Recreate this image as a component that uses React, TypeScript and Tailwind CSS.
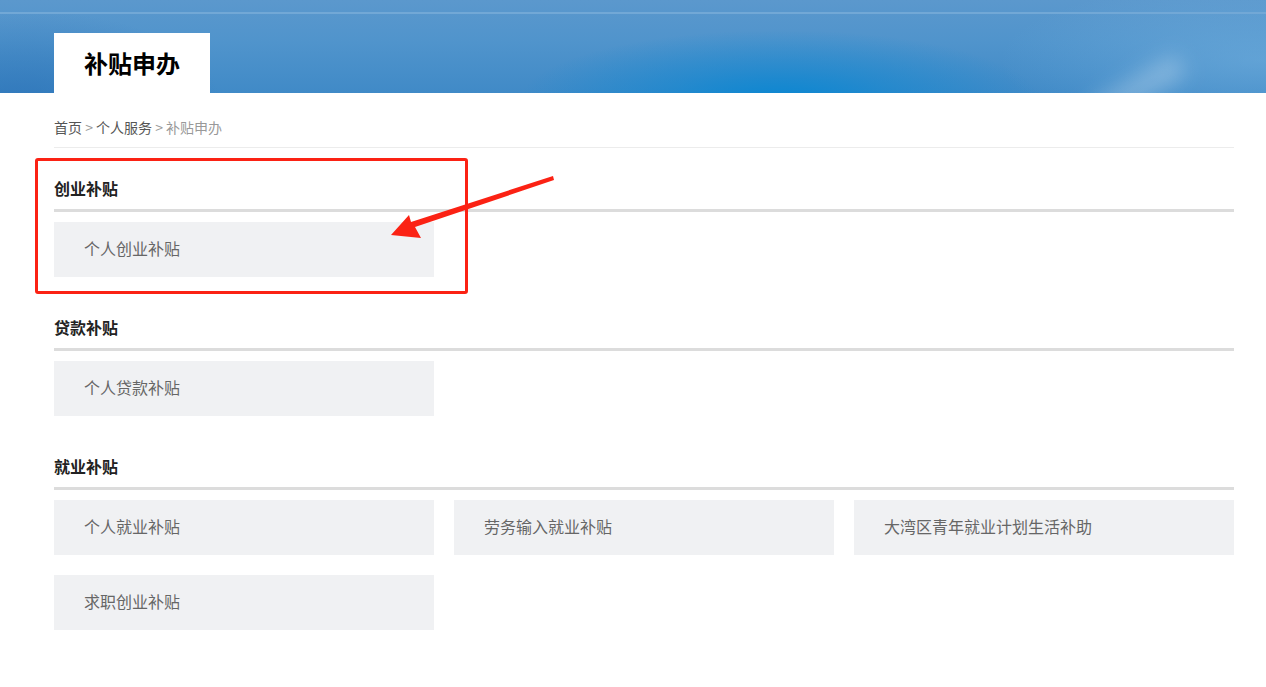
const sections = [
  { title: '创业补贴', items: ['个人创业补贴'] },
  { title: '贷款补贴', items: ['个人贷款补贴'] },
  { title: '就业补贴', items: ['个人就业补贴', '劳务输入就业补贴', '大湾区青年就业计划生活补助', '求职创业补贴'] },
]

export default function App() {
  return (
    <div
      className="relative min-h-[687px] bg-white"
      style={{ fontFamily: '"Microsoft YaHei", "Noto Sans CJK SC", "Noto Sans", sans-serif' }}
    >
      {/* banner */}
      <div className="relative h-[93px] overflow-hidden bg-[linear-gradient(180deg,#5b98cd_0%,#5094cc_45%,#408ac7_100%)]">
        <div className="absolute inset-0 bg-[radial-gradient(ellipse_260px_70px_at_780px_100px,#0a87d2_0%,rgba(10,135,210,0.5)_45%,rgba(10,135,210,0)_100%)]" />
        <div className="absolute inset-0 bg-[radial-gradient(ellipse_200px_90px_at_20px_100px,rgba(40,110,180,0.6)_0%,rgba(40,110,180,0)_100%)]" />
        <div className="absolute inset-0 bg-[radial-gradient(ellipse_260px_80px_at_1260px_60px,rgba(120,180,225,0.5)_0%,rgba(120,180,225,0)_100%)]" />
        <div className="absolute left-[1080px] top-[78px] h-[26px] w-[110px] -rotate-[30deg] rounded-full bg-white/25 blur-[10px]" />
        <div className="relative h-[12px]" />
        <div className="relative h-[2px] bg-[#72a8d6]" />
        <div className="relative mx-[54px] mt-[19px] flex h-[60px] w-[156px] items-center justify-center bg-white">
          <span className="text-[24px] font-bold leading-none text-black">补贴申办</span>
        </div>
      </div>

      <div className="mx-[54px] w-[1180px]">
        {/* breadcrumb */}
        <div className="border-b border-[#ececec] pb-[11px] pt-[25px] text-[14px] leading-[18px] text-[#555]">
          首页 <span className="text-[#999]">&gt;</span> 个人服务 <span className="text-[#999]">&gt; 补贴申办</span>
        </div>

        <div className="pt-[21px]">
          {sections.map((s, i) => (
            <div key={s.title} className={i === 0 ? '' : 'mt-[31px]'}>
              <div className="flex h-[43px] items-center border-b-[3px] border-[#dcdcdc] pb-[2px] text-[16px] font-bold text-[#222]">
                {s.title}
              </div>
              <div className="mt-[10px] grid grid-cols-3 gap-x-[20px] gap-y-[20px]">
                {s.items.map((it) => (
                  <div key={it} className="flex h-[55px] items-center bg-[#f0f1f3] pb-[3px] pl-[30px] text-[16px] text-[#666]">
                    {it}
                  </div>
                ))}
              </div>
            </div>
          ))}
        </div>
      </div>

      {/* annotation */}
      <div className="absolute left-[35px] top-[158px] h-[136px] w-[433px] rounded-[3px] border-[3px] border-[#fb2214]" />
      <svg className="absolute left-0 top-0" width="1266" height="687" viewBox="0 0 1266 687">
        <polygon points="553,176 554,180 415,227 421,238 391,235 409,215 411,222" fill="#fb2214" />
      </svg>
    </div>
  )
}
